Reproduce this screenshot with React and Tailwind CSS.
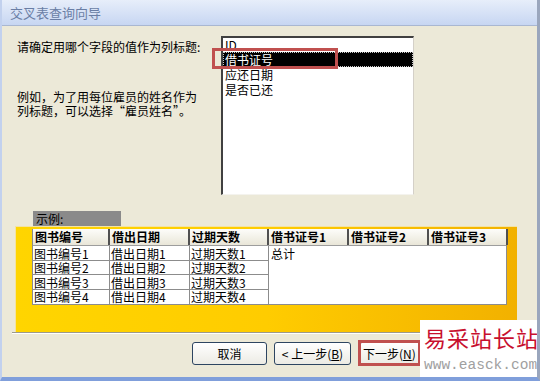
export default function App() {
  const bodyRows = [
    ["图书编号1", "借出日期1", "过期天数1"],
    ["图书编号2", "借出日期2", "过期天数2"],
    ["图书编号3", "借出日期3", "过期天数3"],
    ["图书编号4", "借出日期4", "过期天数4"],
  ];
  const rowH = ["h-[15px] leading-[15px]", "h-[14px] leading-[14px]", "h-[15px] leading-[15px]", "h-[14px] leading-[14px]"];
  const headers = [
    ["图书编号", "w-[77px]"],
    ["借出日期", "w-[80px]"],
    ["过期天数", "w-[79px]"],
    ["借书证号1", "w-[80px]"],
    ["借书证号2", "w-[80px]"],
    ["借书证号3", "w-[79px]"],
  ];
  const colW = ["w-[77px]", "w-[80px]", "w-[79px]"];
  return (
    <div className="relative w-[540px] h-[381px] overflow-hidden bg-[#ece9d8] font-['Noto_Sans_CJK_SC',sans-serif] text-[12px] text-black flex flex-col border-l-2 border-l-[#c2d1ee] border-r-[3px] border-r-[#9aa6bd] border-b-[4px] border-b-[#809fdb]">
      {/* title bar */}
      <div className="h-[26px] shrink-0 border-b border-[#a9b7d1] bg-gradient-to-b from-[#e7eefa] to-[#c7d6f2] pl-[8px] flex items-center text-[13px] text-[#6a7ea5]">
        交叉表查询向导
      </div>

      {/* top section */}
      <div className="flex pt-[10px]">
        <div className="w-[219px] pl-[15px]">
          <div className="mt-[3px] leading-[15px]">请确定用哪个字段的值作为列标题:</div>
          <div className="mt-[36px] leading-[14px]">
            <div>例如，为了用每位雇员的姓名作为</div>
            <div>列标题，可以选择“雇员姓名”。</div>
          </div>
        </div>
        <div className="w-[193px] h-[159px] bg-white border-t-2 border-l-2 border-t-[#404040] border-l-[#404040] border-r border-b border-r-[#d4d0c8] border-b-[#f4f3ee] flex flex-col">
          <div className="h-[14px] leading-[14px] pl-[2px]">ID</div>
          <div className="h-[15px] leading-[15px] pl-[2px] bg-black text-white outline-1 outline-dotted outline-[#c8c8c8] -outline-offset-1">借书证号</div>
          <div className="h-[15px] leading-[15px] pl-[2px]">应还日期</div>
          <div className="h-[15px] leading-[15px] pl-[2px]">是否已还</div>
        </div>
      </div>

      {/* sample label */}
      <div className="mt-[16px] ml-[31px] w-[88px] h-[15px] leading-[15px] bg-[#8a8a8a] pl-[3px]">示例:</div>

      {/* yellow sample area */}
      <div className="ml-[13px] w-[502px] h-[106px] border-l border-t border-[#f3e3a3] bg-gradient-to-r from-[#ffd500] via-[#ffcc00] to-[#f2b100] pt-[2px] pl-[16px]">
        <div className="w-[475px] border-l border-r border-b border-[#8c8c8c] bg-white">
          <div className="flex h-[17px] border-b border-[#9d9d9d]">
            {headers.map(([t, w], i) => (
              <div
                key={i}
                className={`${w} h-full shrink-0 bg-gradient-to-b from-[#fdfdfa] to-[#e9e6d8] border-r-2 border-r-[#505050] font-bold leading-[16px] pl-[2px] whitespace-nowrap`}
              >
                {t}
              </div>
            ))}
          </div>
          <div className="flex">
            <div className="flex flex-col">
              {bodyRows.map((r, ri) => (
                <div key={ri} className={`flex ${rowH[ri]} ${ri < 3 ? "border-b border-[#8c8c8c]" : ""}`}>
                  {r.map((c, ci) => (
                    <div key={ci} className={`${colW[ci]} shrink-0 border-r border-[#8c8c8c] pl-[1px] whitespace-nowrap`}>
                      {c}
                    </div>
                  ))}
                </div>
              ))}
            </div>
            <div className="flex-1 pl-[2px] leading-[15px]">总计</div>
          </div>
        </div>
      </div>

      {/* separator */}
      <div className="ml-[10px] w-[515px] h-[2px] border-t border-t-[#9c9a8c] border-b border-b-white"></div>

      {/* buttons */}
      <div className="flex mt-[8px] ml-[190px] gap-[7px]">
        <button className="w-[75px] h-[23px] rounded-[3px] border border-[#2d4561] bg-gradient-to-b from-white to-[#ecebe4] text-[12px]">取消</button>
        <button className="w-[77px] h-[23px] rounded-[3px] border border-[#2d4561] bg-gradient-to-b from-white to-[#ecebe4] text-[12px] whitespace-nowrap">&lt; 上一步(<span className="underline">B</span>)</button>
        <button className="ml-[1px] w-[75px] h-[23px] rounded-[3px] border border-[#2d4561] bg-gradient-to-b from-white to-[#ecebe4] text-[12px] text-left pl-[3px] whitespace-nowrap">下一步(<span className="underline">N</span>)</button>
      </div>

      {/* red highlight boxes */}
      <div className="absolute left-[210px] top-[48px] w-[126px] h-[21px] border-[3px] border-[#c0504f]"></div>
      <div className="absolute left-[356px] top-[340px] w-[63px] h-[26px] border-[3px] border-[#c0504f]"></div>

      {/* watermark */}
      <div className="absolute left-[418px] top-[320px] w-[122px] h-[61px] bg-white flex flex-col pl-[4px]">
        <div className="mt-[5px] text-[22px] leading-[24px] tracking-[1px] text-[#c8102e] whitespace-nowrap">易采站长站</div>
        <div className="mt-[9px] font-['Liberation_Mono',monospace] text-[14.5px] leading-[14px] text-[#a0a0a0] whitespace-nowrap">www.easck.com</div>
      </div>
    </div>
  );
}
